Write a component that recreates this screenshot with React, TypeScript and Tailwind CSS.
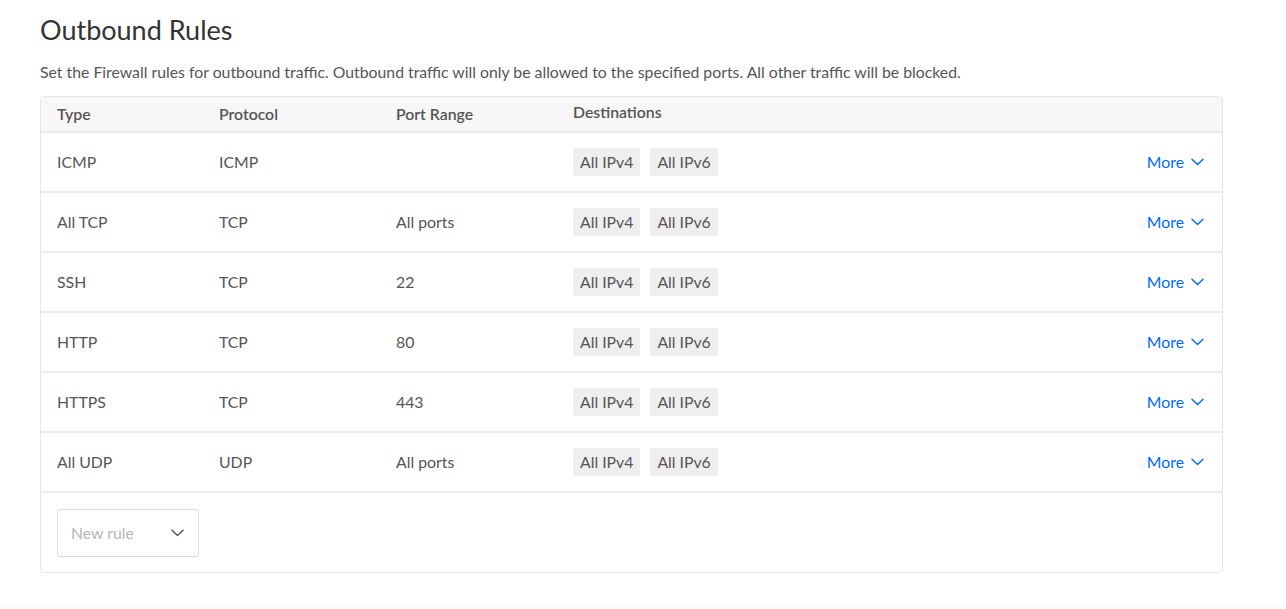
type Rule = { type: string; protocol: string; ports: string };

const rules: Rule[] = [
  { type: "ICMP", protocol: "ICMP", ports: "" },
  { type: "All TCP", protocol: "TCP", ports: "All ports" },
  { type: "SSH", protocol: "TCP", ports: "22" },
  { type: "HTTP", protocol: "TCP", ports: "80" },
  { type: "HTTPS", protocol: "TCP", ports: "443" },
  { type: "All UDP", protocol: "UDP", ports: "All ports" },
];

const cols = "grid grid-cols-[162px_177px_177px_1fr_auto] items-center pl-4 pr-[18px]";

function Chevron({ className }: { className?: string }) {
  return (
    <svg width="13" height="8" viewBox="0 0 13 8" fill="none" className={className}>
      <path d="M1 1.2l5.5 5.3L12 1.2" stroke="currentColor" strokeWidth="1.4" strokeLinecap="round" strokeLinejoin="round" />
    </svg>
  );
}

function Badge({ label }: { label: string }) {
  return <span className="inline-flex h-7 items-center rounded-[3px] bg-[#efefef] px-[7px] text-[15.8px] text-[#555]">{label}</span>;
}

export default function App() {
  return (
    <div className="min-h-screen bg-white font-['Lato','Open_Sans',sans-serif] text-[#444]">
      <div className="px-10 pt-[14px]">
        <h1 className="text-[27px] leading-8 text-[#333]">Outbound Rules</h1>
        <p className="mt-[16px] text-[15.8px] leading-5 text-[#555]">
          Set the Firewall rules for outbound traffic. Outbound traffic will only be allowed to the specified ports. All other traffic will be blocked.
        </p>
        <div className="mt-[14px] w-[1183px] overflow-hidden rounded-[4px] border border-[#e6e6e6]">
          <div className={`${cols} h-[36px] border-b-2 border-[#ececec] bg-[#f7f7f7] text-[15.8px] font-semibold text-[#555]`}>
            <span>Type</span>
            <span>Protocol</span>
            <span>Port Range</span>
            <span className="-mt-[5px]">Destinations</span>
            <span />
          </div>
          {rules.map((rule) => (
            <div key={rule.type} className={`${cols} h-[60px] border-b-2 border-[#ececec] text-[15.8px] text-[#555]`}>
              <span>{rule.type}</span>
              <span>{rule.protocol}</span>
              <span>{rule.ports}</span>
              <div className="flex gap-[10px]">
                <Badge label="All IPv4" />
                <Badge label="All IPv6" />
              </div>
              <button className="flex items-center gap-[7px] text-[15.8px] text-[#0069ff]">
                More
                <Chevron />
              </button>
            </div>
          ))}
          <div className="flex h-[79px] items-center px-4">
            <button className="flex h-12 w-[142px] items-center justify-between rounded-[3px] border border-[#dcdcdc] pl-[13px] pr-[14px] text-[15.8px] text-[#b5b5b5]">
              New rule
              <Chevron className="text-[#555]" />
            </button>
          </div>
        </div>
      </div>
      <div className="mt-7 h-[10px] bg-gradient-to-b from-white to-[#f8f8f8]" />
    </div>
  );
}
